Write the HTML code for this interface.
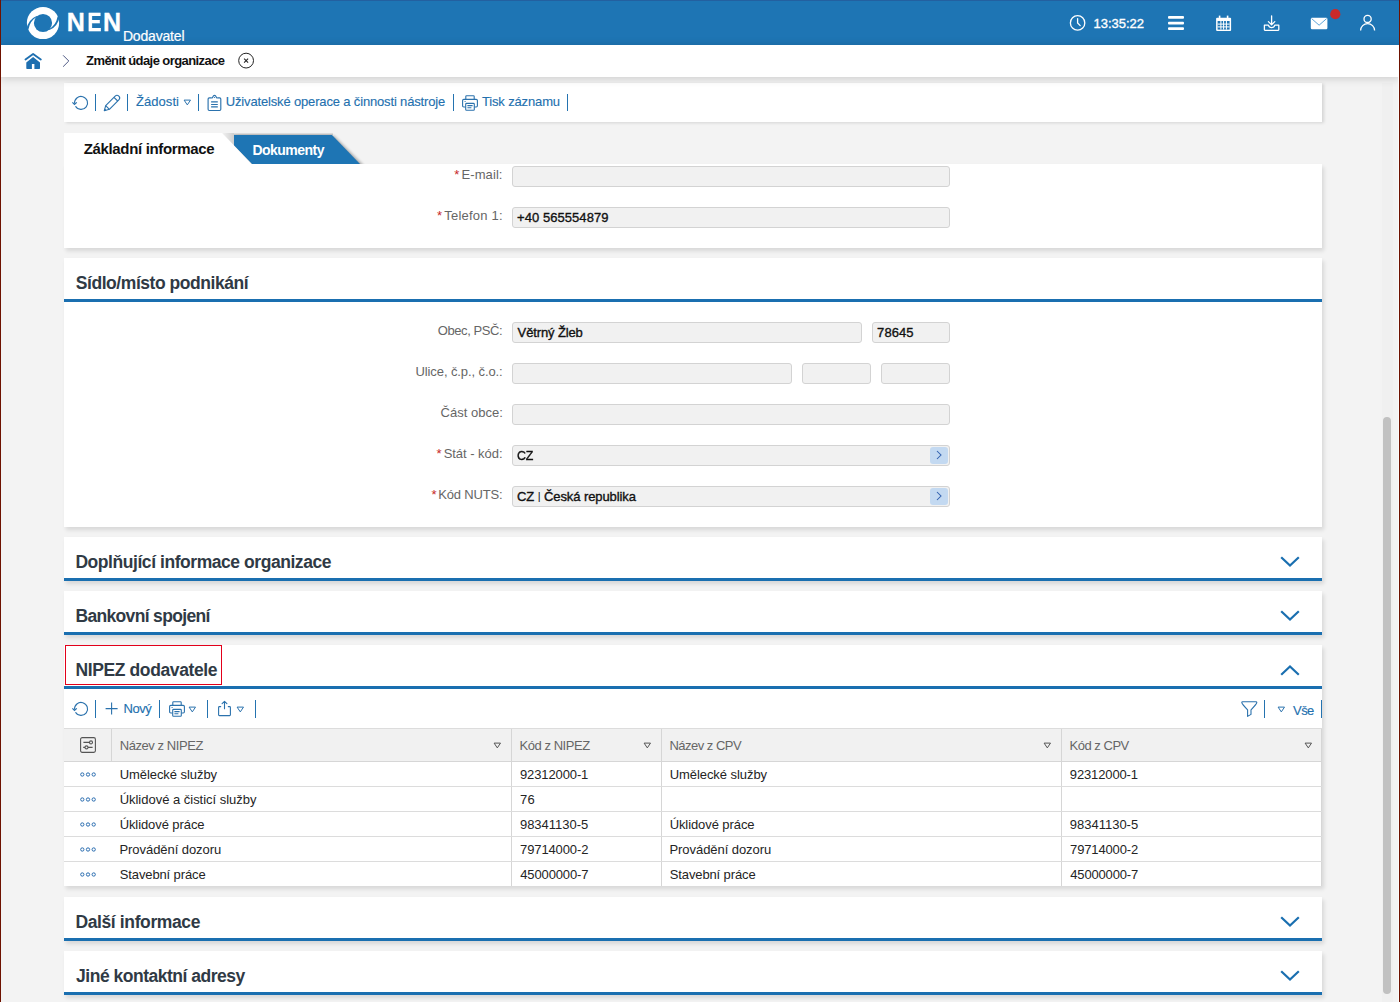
<!DOCTYPE html>
<html lang="cs">
<head>
<meta charset="utf-8">
<title>NEN - Změnit údaje organizace</title>
<style>
*{box-sizing:border-box;margin:0;padding:0}
html,body{width:1400px;height:1002px;overflow:hidden}
body{position:relative;background:#f3f3f3;font-family:"Liberation Sans",sans-serif;font-size:13px;color:#222}
.abs{position:absolute}
.edgeL{left:0;top:0;width:1px;height:1002px;background:#6e1200;z-index:50}
.edgeR{left:1399px;top:0;width:1px;height:1002px;background:#6e1200;z-index:50}
#hdr{left:0;top:0;width:1400px;height:45px;background:#1e75b4;border-top:1px solid #2360a0}
#crumb{left:0;top:45px;width:1400px;height:32px;background:#fff;box-shadow:0 1px 9px rgba(0,0,0,.18);z-index:5}
.t{position:absolute;white-space:nowrap;line-height:1}
.card{position:absolute;left:64px;width:1258px;background:#fff;box-shadow:1.5px 2.5px 4px rgba(0,0,0,.115)}
.sep{position:absolute;width:1px;background:#2473b0}
.blue{color:#2370ae;-webkit-text-stroke:.12px #2370ae}
.hline{position:absolute;left:0;width:1258px;height:3px;background:#1a6fb0}
.stitle{position:absolute;left:12px;font-size:17.5px;font-weight:bold;color:#303a45;white-space:nowrap;line-height:1}
.inp{position:absolute;height:21px;background:#f1f1f1;border:1px solid #d3d3d3;border-radius:3px}
.lbl{position:absolute;white-space:nowrap;line-height:1;color:#666;font-size:13px;text-align:right;right:820px}
.lbl b{color:#c62828;font-weight:normal;margin-right:2px}
.gobtn{position:absolute;right:1px;top:1px;width:18px;height:17px;border-radius:3px;background:#c3d9f1}
.val{position:absolute;left:4px;top:2.5px;font-size:13px;color:#111;white-space:nowrap;line-height:1;-webkit-text-stroke:.35px #111}
.thead{position:absolute;left:0;width:1258px;height:34px;background:#f1f1f1;border-top:1px solid #dcdcdc;border-bottom:1px solid #d6d6d6}
.vl{position:absolute;width:1px;background:#d6d6d6}
.hl{position:absolute;left:0;width:1258px;height:1px;background:#dcdcdc}
.th{color:#666}
.td{color:#242424}
svg{position:absolute;overflow:visible}
#v_stat{letter-spacing:-.35px;transform:scaleX(.955);transform-origin:0 50%}
/*FIT*/
#time{letter-spacing:-0.009px;margin-left:-0.50px}
#bct{letter-spacing:-0.579px;margin-left:0.09px}
#zad{letter-spacing:0.060px;margin-left:-0.04px}
#uziv{letter-spacing:-0.157px;margin-left:-1.26px}
#tisk{letter-spacing:-0.148px;margin-left:-0.04px}
#tab1{letter-spacing:-0.336px;margin-left:-0.36px}
#tab2{letter-spacing:-0.522px;margin-left:-0.63px}
#l_email{letter-spacing:0.092px;margin-right:-0.58px}
#l_tel{letter-spacing:0.204px;margin-right:-0.76px}
#l_obec{letter-spacing:-0.431px;margin-right:-0.17px}
#l_ulice{letter-spacing:-0.101px;margin-right:-0.56px}
#l_cast{letter-spacing:0.012px;margin-right:-0.81px}
#l_stat{letter-spacing:-0.028px;margin-right:-0.58px}
#l_nuts{letter-spacing:-0.185px;margin-right:-0.37px}
#v_tel{letter-spacing:0.053px;margin-left:0.07px}
#v_obec{letter-spacing:-0.124px;margin-left:0.58px}
#v_psc{letter-spacing:0.088px;margin-left:0.10px}
#v_nuts{letter-spacing:-0.095px;margin-left:0.08px}
#t1{letter-spacing:-0.452px;margin-left:-0.16px}
#t2{letter-spacing:-0.444px;margin-left:-0.59px}
#t3{letter-spacing:-0.665px;margin-left:-0.59px}
#t4{letter-spacing:-0.384px;margin-left:-0.59px}
#t5{letter-spacing:-0.379px;margin-left:-0.59px}
#t6{letter-spacing:-0.488px;margin-left:0.10px}
#novy{letter-spacing:-0.454px;margin-left:-0.44px}
#vse{letter-spacing:-0.594px;margin-left:0.08px}
#h1{letter-spacing:-0.429px;margin-left:-0.84px}
#h2{letter-spacing:-0.452px;margin-left:-1.02px}
#h3{letter-spacing:-0.511px;margin-left:-1.07px}
#h4{letter-spacing:-0.475px;margin-left:-1.02px}
#r0c0{letter-spacing:-0.059px;margin-left:-0.89px}
#r0c2{letter-spacing:-0.059px;margin-left:-0.89px}
#r0c1{letter-spacing:-0.107px;margin-left:-0.60px}
#r0c3{letter-spacing:-0.141px;margin-left:-0.66px}
#r1c0{letter-spacing:-0.015px;margin-left:-0.89px}
#r2c0{letter-spacing:-0.080px;margin-left:-0.89px}
#r2c2{letter-spacing:-0.080px;margin-left:-0.89px}
#r2c1{letter-spacing:0.001px;margin-left:-0.60px}
#r2c3{letter-spacing:-0.015px;margin-left:-0.66px}
#r3c0{letter-spacing:-0.063px;margin-left:-1.00px}
#r3c2{letter-spacing:-0.063px;margin-left:-1.00px}
#r3c1{letter-spacing:-0.120px;margin-left:-0.44px}
#r3c3{letter-spacing:-0.145px;margin-left:-0.44px}
#r4c0{letter-spacing:-0.116px;margin-left:-0.79px}
#r4c2{letter-spacing:-0.116px;margin-left:-0.79px}
#r4c1{letter-spacing:-0.142px;margin-left:-0.23px}
#r4c3{letter-spacing:-0.167px;margin-left:-0.23px}
#r1c1{letter-spacing:0.097px;margin-left:-0.44px}
#nen{letter-spacing:0.836px;margin-left:-1.31px}
#dod{letter-spacing:-0.177px;margin-left:-1.11px}
/*ENDFIT*/
</style>
</head>
<body>
<div class="abs edgeL"></div><div class="abs edgeR"></div><div class="abs" style="left:1398px;top:77px;width:1px;height:925px;background:#fcfcfc;z-index:6"></div>

<!-- HEADER -->
<div id="hdr" class="abs">
<svg style="left:26px;top:5px" width="34" height="34" viewBox="0 0 34 34"><circle cx="17" cy="17" r="16.1" fill="#fff"/><circle cx="17" cy="17" r="9.1" fill="#1e75b4"/><path d="M0.2,23.6 Q2.2,13.4 10.6,9.9 L11.1,10.8 Q4,14.6 2.4,23.4 Z" fill="#1e75b4"/><path d="M33.8,10.4 Q31.8,20.6 23.4,24.1 L22.9,23.2 Q30,19.4 31.6,10.6 Z" fill="#1e75b4"/></svg>
<div class="t" id="nen" style="left:68px;top:8.8px;font-size:25px;font-weight:bold;color:#fff;-webkit-text-stroke:.35px #fff">N<span style="display:inline-block;transform:scaleX(.84)">E</span>N</div>
<div class="t" id="dod" style="left:124px;top:28px;font-size:14px;color:#fff;-webkit-text-stroke:.2px #fff">Dodavatel</div>
<svg style="left:1069px;top:13.3px" width="17" height="17" viewBox="0 0 17 17"><circle cx="8.6" cy="8.9" r="7.2" fill="none" stroke="#fff" stroke-width="1.3"/><path d="M8.6,4.6 V9 L11.2,11.6" fill="none" stroke="#fff" stroke-width="1.3" stroke-linecap="round"/></svg>
<div class="t" id="time" style="left:1094px;top:16px;font-size:13px;color:#fff;-webkit-text-stroke:.35px #fff">13:35:22</div>
<svg style="left:1168px;top:14.2px" width="16" height="16" viewBox="0 0 16 16"><rect x="0" y="1" width="16" height="2.8" rx="1" fill="#fff"/><rect x="0" y="6.7" width="16" height="2.8" rx="1" fill="#fff"/><rect x="0" y="12.2" width="16" height="2.8" rx="1" fill="#fff"/></svg>
<svg style="left:1215px;top:14px" width="17" height="17" viewBox="0 0 17 17"><rect x="1.1" y="2.8" width="15" height="13.2" rx="1" fill="#fff"/><rect x="3.8" y="0.6" width="1.6" height="4" fill="#fff"/><rect x="11.8" y="0.6" width="1.6" height="4" fill="#fff"/><g fill="#1e75b4"><rect x="2.6" y="6" width="12" height="8.6"/></g><g fill="#fff"><rect x="2.6" y="8.6" width="12" height="1"/><rect x="2.6" y="11.4" width="12" height="1"/><rect x="5.4" y="6" width="1" height="8.6"/><rect x="8.1" y="6" width="1" height="8.6"/><rect x="10.9" y="6" width="1" height="8.6"/></g></svg>
<svg style="left:1263px;top:14px" width="17" height="17" viewBox="0 0 17 17"><path d="M8.6,0.8 V9.6 M5.4,6.6 L8.6,9.8 L11.8,6.6" fill="none" stroke="#fff" stroke-width="1.3" stroke-linecap="round" stroke-linejoin="round"/><path d="M1.4,10.2 H5.4 Q6,12.6 8.6,12.6 Q11.2,12.6 11.8,10.2 H15.8 V14.6 Q15.8,15.3 15.2,15.3 H2 Q1.4,15.3 1.4,14.6 Z" fill="none" stroke="#fff" stroke-width="1.3" stroke-linejoin="round"/></svg>
<svg style="left:1310px;top:15.6px" width="18" height="13" viewBox="0 0 18 13"><rect x="0.8" y="0.8" width="16.6" height="11.4" rx="1.2" fill="#fff"/><path d="M1.6,1.6 L9.1,8.2 L16.6,1.6" fill="none" stroke="#4a9ad4" stroke-width="0.9"/></svg>
<svg style="left:1330px;top:8px" width="11" height="11" viewBox="0 0 11 11"><circle cx="5.3" cy="5.2" r="5.1" fill="#c92a2a"/></svg>
<svg style="left:1359px;top:13px" width="17" height="17" viewBox="0 0 17 17"><circle cx="8.6" cy="4.9" r="3.6" fill="none" stroke="#fff" stroke-width="1.3"/><path d="M1.6,16.6 A7,7 0 0 1 15.6,16.6" fill="none" stroke="#fff" stroke-width="1.3"/></svg>
</div>
<div id="crumb" class="abs">
<svg style="left:24px;top:7px" width="18" height="18" viewBox="0 0 18 18"><path d="M1.5,7.5 L9.1,1.9 L16.8,7.5" fill="none" stroke="#1e6fb0" stroke-width="1.9" stroke-linecap="round" stroke-linejoin="round"/><path d="M9.1,4.9 L2.3,10.5 V16.2 Q2.3,16.9 3,16.9 H7.9 V12 H10.4 V16.9 H15.3 Q16,16.9 16,16.2 V10.5 Z" fill="#1e6fb0"/></svg>
<svg style="left:62px;top:10px" width="8" height="13" viewBox="0 0 8 13"><path d="M1.1,0.3 L6.8,6 L1.1,11.7" fill="none" stroke="#4f5a85" stroke-width="1"/></svg>
<div class="t" id="bct" style="left:86px;top:9px;font-size:13px;font-weight:bold;color:#111">Změnit údaje organizace</div>
<svg style="left:238px;top:7.2px" width="17" height="17" viewBox="0 0 17 17"><circle cx="8.1" cy="8.6" r="7.4" fill="none" stroke="#222" stroke-width="1"/><path d="M6.1,6.6 L10.1,10.6 M10.1,6.6 L6.1,10.6" stroke="#222" stroke-width="1.05" fill="none"/></svg>
</div>

<!-- TOOLBAR -->
<div class="card" id="tb" style="top:83px;height:39px;box-shadow:2px 1px 3px rgba(0,0,0,.13)">
<svg style="left:8px;top:12px" width="17" height="16" viewBox="0 0 17 16"><path d="M3.5,11.3 A6.5,6.5 0 1 0 2.6,8.6" fill="none" stroke="#2b72ad" stroke-width="1.15"/><path d="M0.4,7.3 L2.5,9.5 L4.8,7.3" fill="none" stroke="#2b72ad" stroke-width="1.15" stroke-linejoin="miter"/></svg>
<div class="sep" style="left:31px;top:11px;height:17px"></div>
<svg style="left:39px;top:11px" width="18" height="18" viewBox="0 0 18 18"><g fill="none" stroke="#2b72ad" stroke-width="1.1" stroke-linejoin="round"><path d="M1.3,16.7 L2.7,11.6 L12.16,2.16 A2.6,2.6 0 0 1 15.84,5.84 L6.4,15.3 Z"/><path d="M11,3.3 L14.7,7"/><path d="M2.7,11.6 L6.4,15.3"/><path d="M1.4,16.6 L1.9,14.9 L3.1,16.1 Z" fill="#2b72ad" stroke-width="0.6"/></g></svg>
<div class="sep" style="left:63px;top:11px;height:17px"></div>
<div class="t blue" id="zad" style="left:72px;top:12px">Žádosti</div>
<svg style="left:119.5px;top:16.5px" width="7" height="6" viewBox="0 0 7 6"><path d="M0.1,0.1 H6.5 L3.3,4.9 Z" fill="none" stroke="#2b72ad" stroke-width="1"/></svg>
<div class="sep" style="left:134px;top:11px;height:17px"></div>
<svg style="left:143px;top:12px" width="15" height="17" viewBox="0 0 15 17"><g fill="none" stroke="#2b72ad" stroke-width="1.15" stroke-linejoin="round"><path d="M4.8,2.9 H2.3 Q1.1,2.9 1.1,4.1 V14.3 Q1.1,15.5 2.3,15.5 H12.6 Q13.8,15.5 13.8,14.3 V4.1 Q13.8,2.9 12.6,2.9 H10.2"/><path d="M4.8,2.9 Q5.6,2.9 5.9,1.8 Q6.4,0.4 7.5,0.4 Q8.6,0.4 9.1,1.8 Q9.4,2.9 10.2,2.9"/><path d="M4.1,6.9 H10.8 M4.1,9.5 H10.8 M4.1,11.9 H10.8"/></g><circle cx="7.5" cy="2.5" r="0.55" fill="#2b72ad"/></svg>
<div class="t blue" id="uziv" style="left:163px;top:12px">Uživatelské operace a činnosti nástroje</div>
<div class="sep" style="left:389px;top:11px;height:17px"></div>
<svg style="left:397.8px;top:12px" width="16" height="16" viewBox="0 0 16 16"><g fill="none" stroke="#2b72ad" stroke-width="1.1" stroke-linejoin="round"><path d="M3.8,4.2 V1.6 Q3.8,0.8 4.6,0.8 H11.4 Q12.2,0.8 12.2,1.6 V4.2"/><path d="M3.6,12 H1.8 Q0.6,12 0.6,10.8 V5.6 Q0.6,4.4 1.8,4.4 H14.2 Q15.4,4.4 15.4,5.6 V10.8 Q15.4,12 14.2,12 H12.4"/><rect x="3.7" y="8.4" width="8.6" height="6.8" rx="0.8"/><path d="M5.4,10.6 H10.6 M5.4,12.8 H9.4"/><path d="M2.6,6.5 H3.6"/></g></svg>
<div class="t blue" id="tisk" style="left:418px;top:12px">Tisk záznamu</div>
<div class="sep" style="left:503px;top:11px;height:17px"></div>
</div>

<!-- TABS -->
<svg style="left:0;top:0;z-index:3" width="1400" height="170" viewBox="0 0 1400 170">
<defs><linearGradient id="g1" x1="0" y1="0" x2="1" y2="1"><stop offset="0" stop-color="#d0d0d0"/><stop offset="1" stop-color="#f0f0f0" stop-opacity="0"/></linearGradient>
<linearGradient id="g2" x1="222" y1="0" x2="235" y2="0" gradientUnits="userSpaceOnUse"><stop offset="0" stop-color="#f2f2f2"/><stop offset="1" stop-color="#cccccc"/></linearGradient><linearGradient id="g3" x1="0" y1="132.4" x2="0" y2="135" gradientUnits="userSpaceOnUse"><stop offset="0" stop-color="#000" stop-opacity="0"/><stop offset="1" stop-color="#000" stop-opacity=".22"/></linearGradient><clipPath id="cp"><rect x="0" y="120" width="1400" height="44"/></clipPath><filter id="sh" x="-10%%" y="-20%%" width="120%%" height="140%%"><feGaussianBlur stdDeviation="1.6"/></filter></defs>
<g clip-path="url(#cp)"><polygon points="236,136 334,136 363,165 363,175 236,175" fill="#000" opacity=".33" filter="url(#sh)"/></g>
<polygon points="234,135 332,135 360,164 234,164" fill="#1e75b4"/>
<polygon points="222,133 252,164 234,164 234,133" fill="url(#g2)"/><rect x="234" y="132.4" width="99" height="2.6" fill="url(#g3)"/>
<polygon points="64,133 222,133 252,164.5 64,164.5" fill="#fff"/>
</svg>
<div class="t" id="tab1" style="left:84px;top:141px;font-size:15px;font-weight:bold;color:#111;z-index:4">Základní informace</div>
<div class="t" id="tab2" style="left:253px;top:143px;font-size:14px;font-weight:bold;color:#fff;z-index:4">Dokumenty</div>
<!-- TAB BODY -->
<div class="card" id="tabbody" style="top:164px;height:84px"><div class="lbl" id="l_email" style="top:4px"><b>*</b>E-mail:</div><div class="inp" style="left:448px;top:2px;width:438px"></div><div class="lbl" id="l_tel" style="top:45px"><b>*</b>Telefon 1:</div><div class="inp" style="left:448px;top:43px;width:438px"><div class="val" id="v_tel">+40 565554879</div></div></div>

<!-- SECTION: Sidlo -->
<div class="card" id="sidlo" style="top:258px;height:269px"><div class="stitle" id="t1" style="top:16.7px">Sídlo/místo podnikání</div><div class="hline" style="top:41px"></div><div class="lbl" id="l_obec" style="top:66px">Obec, PSČ:</div><div class="inp" style="left:448px;top:64px;width:350px"><div class="val" id="v_obec">Větrný Žleb</div></div><div class="inp" style="left:808px;top:64px;width:78px"><div class="val" id="v_psc">78645</div></div><div class="lbl" id="l_ulice" style="top:107px">Ulice, č.p., č.o.:</div><div class="inp" style="left:448px;top:105px;width:280px"></div><div class="inp" style="left:738px;top:105px;width:69px"></div><div class="inp" style="left:817px;top:105px;width:69px"></div><div class="lbl" id="l_cast" style="top:148px">Část obce:</div><div class="inp" style="left:448px;top:146px;width:438px"></div><div class="lbl" id="l_stat" style="top:189px"><b>*</b>Stát - kód:</div><div class="inp" style="left:448px;top:187px;width:438px"><div class="val" id="v_stat">CZ</div><div class="gobtn"><svg style="left:6px;top:3px" width="6" height="10" viewBox="0 0 6 10"><path d="M1,1 L5,5 L1,9" fill="none" stroke="#2f5fae" stroke-width="1.05"/></svg></div></div><div class="lbl" id="l_nuts" style="top:230px"><b>*</b>Kód NUTS:</div><div class="inp" style="left:448px;top:228px;width:438px"><div class="val" id="v_nuts">CZ <span style="-webkit-text-stroke:0;font-size:11px;position:relative;top:-1px">|</span> Česká republika</div><div class="gobtn"><svg style="left:6px;top:3px" width="6" height="10" viewBox="0 0 6 10"><path d="M1,1 L5,5 L1,9" fill="none" stroke="#2f5fae" stroke-width="1.05"/></svg></div></div></div>

<div class="card" id="s2" style="top:537px;height:44px"><svg style="left:1215.5px;top:19px" width="20" height="11" viewBox="0 0 20 11"><path d="M1.2,1.2 L10,9.6 L18.8,1.2" fill="none" stroke="#1a6fb0" stroke-width="2.2"/></svg><div class="stitle" id="t2" style="top:16.7px">Doplňující informace organizace</div><div class="hline" style="top:41px"></div></div>
<div class="card" id="s3" style="top:591px;height:44px"><svg style="left:1215.5px;top:19px" width="20" height="11" viewBox="0 0 20 11"><path d="M1.2,1.2 L10,9.6 L18.8,1.2" fill="none" stroke="#1a6fb0" stroke-width="2.2"/></svg><div class="stitle" id="t3" style="top:16.7px">Bankovní spojení</div><div class="hline" style="top:41px"></div></div>
<div class="card" id="s4" style="top:645px;height:241px"><svg style="left:1215.5px;top:20px" width="20" height="11" viewBox="0 0 20 11"><path d="M1.2,9.8 L10,1.4 L18.8,9.8" fill="none" stroke="#1a6fb0" stroke-width="2.2"/></svg><div class="stitle" id="t4" style="top:16.7px">NIPEZ dodavatele</div><div class="hline" style="top:41px"></div><div style="position:absolute;left:1px;top:0;width:157px;height:40px;border:1px solid #e2001a"></div><svg style="left:8px;top:56px" width="17" height="16" viewBox="0 0 17 16"><path d="M3.5,11.3 A6.5,6.5 0 1 0 2.6,8.6" fill="none" stroke="#2b72ad" stroke-width="1.15"/><path d="M0.4,7.3 L2.5,9.5 L4.8,7.3" fill="none" stroke="#2b72ad" stroke-width="1.15" stroke-linejoin="miter"/></svg><div class="sep" style="left:31px;top:55px;height:18px"></div><svg style="left:41px;top:57px" width="13" height="13" viewBox="0 0 13 13"><path d="M6.6,0.6 V12.6 M0.6,6.6 H12.6" stroke="#2b72ad" stroke-width="1.1" fill="none"/></svg><div class="t blue" id="novy" style="left:60px;top:57px">Nový</div><div class="sep" style="left:95px;top:55px;height:18px"></div><svg style="left:104.5px;top:56px" width="16" height="16" viewBox="0 0 16 16"><g fill="none" stroke="#2b72ad" stroke-width="1.1" stroke-linejoin="round"><path d="M3.8,4.2 V1.6 Q3.8,0.8 4.6,0.8 H11.4 Q12.2,0.8 12.2,1.6 V4.2"/><path d="M3.6,12 H1.8 Q0.6,12 0.6,10.8 V5.6 Q0.6,4.4 1.8,4.4 H14.2 Q15.4,4.4 15.4,5.6 V10.8 Q15.4,12 14.2,12 H12.4"/><rect x="3.7" y="8.4" width="8.6" height="6.8" rx="0.8"/><path d="M5.4,10.6 H10.6 M5.4,12.8 H9.4"/><path d="M2.6,6.5 H3.6"/></g></svg><svg style="left:125px;top:61.6px" width="7" height="6" viewBox="0 0 7 6"><path d="M0.1,0.1 H6.5 L3.3,4.9 Z" fill="none" stroke="#2b72ad" stroke-width="1"/></svg><div class="sep" style="left:143px;top:55px;height:18px"></div><svg style="left:153px;top:55px" width="15" height="17" viewBox="0 0 15 17"><g fill="none" stroke="#2b72ad" stroke-width="1.1" stroke-linejoin="round" stroke-linecap="round"><path d="M7.5,1.3 V8.8 M5.1,3.7 L7.5,1.3 L9.9,3.7"/><path d="M3.7,6.6 H2.4 Q1.6,6.6 1.6,7.4 V14.8 Q1.6,15.6 2.4,15.6 H12.6 Q13.4,15.6 13.4,14.8 V7.4 Q13.4,6.6 12.6,6.6 H11.3"/></g></svg><svg style="left:172.5px;top:61.6px" width="7" height="6" viewBox="0 0 7 6"><path d="M0.1,0.1 H6.5 L3.3,4.9 Z" fill="none" stroke="#2b72ad" stroke-width="1"/></svg><div class="sep" style="left:191px;top:55px;height:18px"></div><svg style="left:1177px;top:56px" width="17" height="16" viewBox="0 0 17 16"><path d="M0.8,1.6 Q0.8,0.8 1.6,0.8 H15 Q15.8,0.8 15.8,1.6 Q15.6,3 10,8.8 V13.4 L6.6,15.4 V8.8 Q1,3 0.8,1.6 Z" fill="none" stroke="#2b72ad" stroke-width="1.1" stroke-linejoin="round"/></svg><div class="sep" style="left:1200px;top:55px;height:18px"></div><svg style="left:1213.5px;top:61.6px" width="7" height="6" viewBox="0 0 7 6"><path d="M0.1,0.1 H6.5 L3.3,4.9 Z" fill="none" stroke="#2b72ad" stroke-width="1"/></svg><div class="t blue" id="vse" style="left:1229px;top:59px">Vše</div><div class="sep" style="left:1257px;top:55px;height:18px"></div><div class="thead" style="top:83px"></div><svg style="left:16px;top:92px" width="16" height="16" viewBox="0 0 16 16"><g fill="none" stroke="#555" stroke-width="1.1"><rect x="0.6" y="0.6" width="14.8" height="14.8" rx="1.6"/><path d="M3.4,5.4 H9.6 M12.6,5.4 H12.8 M3.2,10.4 H5 M8,10.4 H12.6"/><circle cx="11" cy="5.4" r="1.5"/><circle cx="6.5" cy="10.4" r="1.5"/></g></svg><div class="t th" id="h1" style="left:56.5px;top:94px">Název z NIPEZ</div><svg style="left:430px;top:97.6px" width="7" height="6" viewBox="0 0 7 6"><path d="M0.1,0.1 H6.5 L3.3,4.9 Z" fill="none" stroke="#555" stroke-width="1"/></svg><div class="t th" id="h2" style="left:456.5px;top:94px">Kód z NIPEZ</div><svg style="left:580px;top:97.6px" width="7" height="6" viewBox="0 0 7 6"><path d="M0.1,0.1 H6.5 L3.3,4.9 Z" fill="none" stroke="#555" stroke-width="1"/></svg><div class="t th" id="h3" style="left:606.5px;top:94px">Název z CPV</div><svg style="left:980px;top:97.6px" width="7" height="6" viewBox="0 0 7 6"><path d="M0.1,0.1 H6.5 L3.3,4.9 Z" fill="none" stroke="#555" stroke-width="1"/></svg><div class="t th" id="h4" style="left:1006.5px;top:94px">Kód z CPV</div><svg style="left:1240.5px;top:97.6px" width="7" height="6" viewBox="0 0 7 6"><path d="M0.1,0.1 H6.5 L3.3,4.9 Z" fill="none" stroke="#555" stroke-width="1"/></svg><div class="vl" style="left:47px;top:84px;height:33px"></div><div class="vl" style="left:447px;top:84px;height:157px"></div><div class="vl" style="left:597px;top:84px;height:157px"></div><div class="vl" style="left:997px;top:84px;height:157px"></div><div class="vl" style="left:1257px;top:84px;height:157px"></div><svg style="left:16px;top:126.5px;margin-top:0px" width="16" height="5" viewBox="0 0 16 5"><g fill="none" stroke="#2a6db0" stroke-width="1"><circle cx="2.3" cy="2.5" r="1.65"/><circle cx="8" cy="2.5" r="1.65"/><circle cx="13.7" cy="2.5" r="1.65"/></g></svg><div class="t td" id="r0c0" style="left:56.5px;top:123px">Umělecké služby</div><div class="t td" id="r0c1" style="left:456.5px;top:123px">92312000-1</div><div class="t td" id="r0c2" style="left:606.5px;top:123px">Umělecké služby</div><div class="t td" id="r0c3" style="left:1006.5px;top:123px">92312000-1</div><div class="hl" style="top:141px"></div><svg style="left:16px;top:126.5px;margin-top:25px" width="16" height="5" viewBox="0 0 16 5"><g fill="none" stroke="#2a6db0" stroke-width="1"><circle cx="2.3" cy="2.5" r="1.65"/><circle cx="8" cy="2.5" r="1.65"/><circle cx="13.7" cy="2.5" r="1.65"/></g></svg><div class="t td" id="r1c0" style="left:56.5px;top:148px">Úklidové a čisticí služby</div><div class="t td" id="r1c1" style="left:456.5px;top:148px">76</div><div class="hl" style="top:166px"></div><svg style="left:16px;top:126.5px;margin-top:50px" width="16" height="5" viewBox="0 0 16 5"><g fill="none" stroke="#2a6db0" stroke-width="1"><circle cx="2.3" cy="2.5" r="1.65"/><circle cx="8" cy="2.5" r="1.65"/><circle cx="13.7" cy="2.5" r="1.65"/></g></svg><div class="t td" id="r2c0" style="left:56.5px;top:173px">Úklidové práce</div><div class="t td" id="r2c1" style="left:456.5px;top:173px">98341130-5</div><div class="t td" id="r2c2" style="left:606.5px;top:173px">Úklidové práce</div><div class="t td" id="r2c3" style="left:1006.5px;top:173px">98341130-5</div><div class="hl" style="top:191px"></div><svg style="left:16px;top:126.5px;margin-top:75px" width="16" height="5" viewBox="0 0 16 5"><g fill="none" stroke="#2a6db0" stroke-width="1"><circle cx="2.3" cy="2.5" r="1.65"/><circle cx="8" cy="2.5" r="1.65"/><circle cx="13.7" cy="2.5" r="1.65"/></g></svg><div class="t td" id="r3c0" style="left:56.5px;top:198px">Provádění dozoru</div><div class="t td" id="r3c1" style="left:456.5px;top:198px">79714000-2</div><div class="t td" id="r3c2" style="left:606.5px;top:198px">Provádění dozoru</div><div class="t td" id="r3c3" style="left:1006.5px;top:198px">79714000-2</div><div class="hl" style="top:216px"></div><svg style="left:16px;top:126.5px;margin-top:100px" width="16" height="5" viewBox="0 0 16 5"><g fill="none" stroke="#2a6db0" stroke-width="1"><circle cx="2.3" cy="2.5" r="1.65"/><circle cx="8" cy="2.5" r="1.65"/><circle cx="13.7" cy="2.5" r="1.65"/></g></svg><div class="t td" id="r4c0" style="left:56.5px;top:223px">Stavební práce</div><div class="t td" id="r4c1" style="left:456.5px;top:223px">45000000-7</div><div class="t td" id="r4c2" style="left:606.5px;top:223px">Stavební práce</div><div class="t td" id="r4c3" style="left:1006.5px;top:223px">45000000-7</div></div>
<div class="card" id="s5" style="top:897px;height:44px"><svg style="left:1215.5px;top:19px" width="20" height="11" viewBox="0 0 20 11"><path d="M1.2,1.2 L10,9.6 L18.8,1.2" fill="none" stroke="#1a6fb0" stroke-width="2.2"/></svg><div class="stitle" id="t5" style="top:16.7px">Další informace</div><div class="hline" style="top:41px"></div></div>
<div class="card" id="s6" style="top:951px;height:44px"><svg style="left:1215.5px;top:19px" width="20" height="11" viewBox="0 0 20 11"><path d="M1.2,1.2 L10,9.6 L18.8,1.2" fill="none" stroke="#1a6fb0" stroke-width="2.2"/></svg><div class="stitle" id="t6" style="top:16.7px">Jiné kontaktní adresy</div><div class="hline" style="top:41px"></div></div>

<div class="abs" style="left:1382px;top:83px;width:11px;height:919px;background:#f0f0f0"></div>
<div class="abs" style="left:1383px;top:417px;width:8px;height:577px;border-radius:4px;background:#c1c1c1"></div>
</body>
</html>
